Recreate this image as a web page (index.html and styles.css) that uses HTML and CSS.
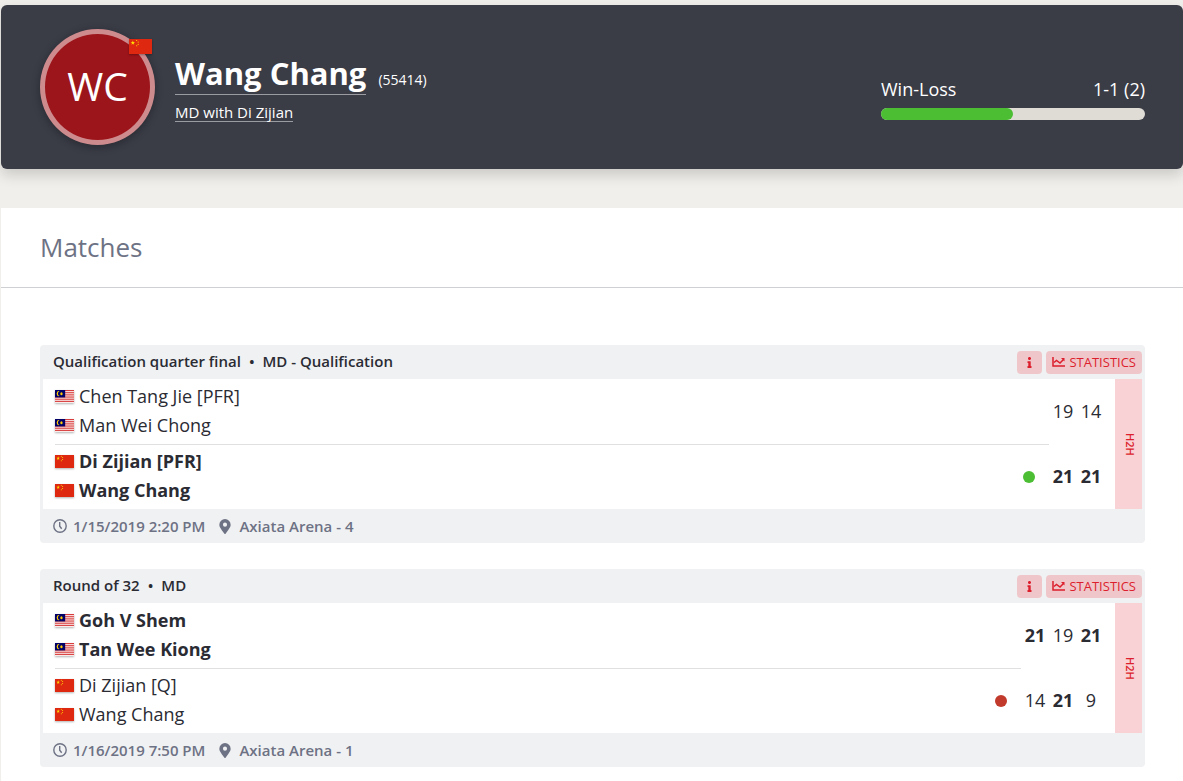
FILE: index.html
```html
<!DOCTYPE html>
<html lang="en">
<head>
    <meta charset="UTF-8">
    <meta name="viewport" content="width=device-width, initial-scale=1">
    <title>Wang Chang</title>
    <link rel="stylesheet" href="styles.css">
</head>
<body>

<svg class="sprite" aria-hidden="true">
    <symbol id="flag-chn" viewBox="0 0 30 20" preserveAspectRatio="none">
        <rect width="30" height="20" fill="#de2910"/>
        <path fill="#ffde00" d="M5 2l.7 2.1h2.2L6.1 5.4l.7 2.1L5 6.2 3.2 7.5l.7-2.1-1.8-1.3h2.2z"/>
        <g fill="#ffde00">
            <circle cx="10" cy="2" r=".8"/>
            <circle cx="12" cy="4" r=".8"/>
            <circle cx="12" cy="7" r=".8"/>
            <circle cx="10" cy="9" r=".8"/>
        </g>
    </symbol>
    <symbol id="flag-mas" viewBox="0 0 28 14" preserveAspectRatio="none">
        <rect width="28" height="14" fill="#fff"/>
        <path stroke="#cc0001" d="M0 .5h28M0 2.5h28M0 4.5h28M0 6.5h28M0 8.5h28M0 10.5h28M0 12.5h28"/>
        <rect width="15" height="8" fill="#010066"/>
        <path fill="#fc0" d="M6.6 1.7a2.7 2.7 0 1 0 0 4.6 2.3 2.3 0 1 1 0-4.6z"/>
        <circle cx="9.500" cy="4" r="1.700" fill="#fc0"/>
    </symbol>
    <symbol id="icon-info" viewBox="0 0 192 512">
        <path d="M20 424.200h20V279.800H20c-11 0-20-9-20-20V212c0-11 9-20 20-20h112c11 0 20 9 20 20v212.200h20c11 0 20 9 20 20V492c0 11-9 20-20 20H20c-11 0-20-9-20-20v-47.800c0-11 9-20 20-20zM96 0C56.200 0 24 32.200 24 72s32.200 72 72 72 72-32.200 72-72S135.800 0 96 0z"/>
    </symbol>
    <symbol id="icon-chart" viewBox="0 0 13 10">
        <path fill="none" stroke="currentColor" stroke-width="1.500" d="M1 0v9h12"/>
        <path fill="none" stroke="currentColor" stroke-width="1.500" d="M2 5.500l2.500-2L8 6l3.500-3.500"/>
        <path d="M9 1h3.500v3.500z"/>
    </symbol>
    <symbol id="icon-clock" viewBox="0 0 14 14">
        <circle cx="7" cy="7" r="6.200" fill="none" stroke="currentColor" stroke-width="1.400"/>
        <path fill="none" stroke="currentColor" stroke-width="1.400" d="M6.700 3v4.300l2 2.500"/>
    </symbol>
    <symbol id="icon-pin" viewBox="0 0 384 512">
        <path d="M172 502C27 291 0 270 0 192a192 192 0 0 1 384 0c0 78-27 99-172 310-10 13-30 13-40 0zm20-240a70 70 0 1 0 0-140 70 70 0 0 0 0 140z"/>
    </symbol>
</svg>

<header class="profile">
    <div class="avatar">
        WC
        <svg class="flag avatar-flag" role="img" aria-label="China"><use href="#flag-chn"/></svg>
    </div>
    <div class="profile-info">
        <div class="profile-title">
            <h1><a href="#">Wang Chang</a></h1>
            <span class="profile-id">(55414)</span>
        </div>
        <a class="profile-event" href="#">MD with Di Zijian</a>
    </div>
    <div class="record">
        <div class="record-label">
            <span id="win-loss">Win-Loss</span>
            <span>1-1 (2)</span>
        </div>
        <div class="bar" role="progressbar" aria-labelledby="win-loss" aria-valuenow="50">
            <div class="bar-fill" style="width: 50%"></div>
        </div>
    </div>
</header>

<main class="content">
    <h2 class="content-title">Matches</h2>

    <div class="matches">
        <article class="match">
            <div class="match-header">
                <span>Qualification quarter final</span>
                <span class="sep">•</span>
                <span>MD - Qualification</span>
                <div class="actions">
                    <button class="btn" type="button" aria-label="Info"><svg class="icon-info"><use href="#icon-info"/></svg></button>
                    <button class="btn" type="button"><svg class="icon-chart"><use href="#icon-chart"/></svg>STATISTICS</button>
                </div>
            </div>
            <div class="match-body">
                <div class="teams">
                    <div class="team">
                        <div class="players">
                            <a href="#"><svg class="flag"><use href="#flag-mas"/></svg>Chen Tang Jie [PFR]</a>
                            <a href="#"><svg class="flag"><use href="#flag-mas"/></svg>Man Wei Chong</a>
                        </div>
                        <div class="scores"><span>19</span><span>14</span></div>
                    </div>
                    <div class="team won">
                        <div class="players">
                            <a href="#"><svg class="flag"><use href="#flag-chn"/></svg>Di Zijian [PFR]</a>
                            <a href="#"><svg class="flag"><use href="#flag-chn"/></svg>Wang Chang</a>
                            <i class="dot dot-win"></i>
                        </div>
                        <div class="scores"><b>21</b><b>21</b></div>
                    </div>
                </div>
                <a class="h2h" href="#">H2H</a>
            </div>
            <div class="match-footer">
                <svg class="icon-clock"><use href="#icon-clock"/></svg>
                <span>1/15/2019 2:20 PM</span>
                <svg class="icon-pin"><use href="#icon-pin"/></svg>
                <span>Axiata Arena - 4</span>
            </div>
        </article>

        <article class="match">
            <div class="match-header">
                <span>Round of 32</span>
                <span class="sep">•</span>
                <span>MD</span>
                <div class="actions">
                    <button class="btn" type="button" aria-label="Info"><svg class="icon-info"><use href="#icon-info"/></svg></button>
                    <button class="btn" type="button"><svg class="icon-chart"><use href="#icon-chart"/></svg>STATISTICS</button>
                </div>
            </div>
            <div class="match-body">
                <div class="teams">
                    <div class="team won">
                        <div class="players">
                            <a href="#"><svg class="flag"><use href="#flag-mas"/></svg>Goh V Shem</a>
                            <a href="#"><svg class="flag"><use href="#flag-mas"/></svg>Tan Wee Kiong</a>
                        </div>
                        <div class="scores"><b>21</b><span>19</span><b>21</b></div>
                    </div>
                    <div class="team">
                        <div class="players">
                            <a href="#"><svg class="flag"><use href="#flag-chn"/></svg>Di Zijian [Q]</a>
                            <a href="#"><svg class="flag"><use href="#flag-chn"/></svg>Wang Chang</a>
                            <i class="dot dot-loss"></i>
                        </div>
                        <div class="scores"><span>14</span><b>21</b><span>9</span></div>
                    </div>
                </div>
                <a class="h2h" href="#">H2H</a>
            </div>
            <div class="match-footer">
                <svg class="icon-clock"><use href="#icon-clock"/></svg>
                <span>1/16/2019 7:50 PM</span>
                <svg class="icon-pin"><use href="#icon-pin"/></svg>
                <span>Axiata Arena - 1</span>
            </div>
        </article>
    </div>
</main>

</body>
</html>
```
FILE: styles.css
```css
* {
    box-sizing: border-box;
}

body {
    margin: 0;
    padding: 5px 0 0 1px;
    background: #f0efeb;
    color: #2a2b33;
    font-family: "Open Sans", sans-serif;
    font-size: 18px;
}

a {
    color: inherit;
    text-decoration: none;
}

svg {
    display: block;
    flex: none;
    fill: currentColor;
}

.sprite {
    position: absolute;
    width: 0;
    height: 0;
}

/* profile */
.profile {
    display: flex;
    align-items: center;
    padding: 24px 38px 24px 39px;
    border-radius: 6px;
    background: #3a3c46;
    color: #fff;
    box-shadow: 0 6px 14px rgba(0, 0, 0, 0.16);
}

.avatar {
    position: relative;
    display: flex;
    align-items: center;
    justify-content: center;
    width: 115px;
    height: 116px;
    padding-bottom: 3px;
    border: 5px solid #ce8b8e;
    border-radius: 50%;
    background: #9c151b;
    box-shadow: 0 2px 8px rgba(0, 0, 0, 0.3);
    font-size: 39px;
}

.flag {
    width: 19px;
    height: 13px;
    box-shadow: 0 1px 2px rgba(0, 0, 0, 0.3);
}

.avatar-flag {
    position: absolute;
    top: 5px;
    right: -2px;
    width: 23px;
    height: 15px;
}

.profile-info {
    flex: 1;
    padding-left: 20px;
}

.profile-title {
    display: flex;
    align-items: baseline;
    gap: 12px;
    margin-bottom: 4px;
}

h1 {
    margin: 0;
    border-bottom: 1px solid #9b9ca1;
    font-size: 31px;
    line-height: 42px;
}

.profile-id {
    font-size: 14px;
}

.profile-event {
    display: inline-block;
    border-bottom: 1px solid #9b9ca1;
    font-size: 15px;
    font-weight: 500;
    line-height: 18px;
}

.record {
    width: 264px;
    padding-top: 22px;
}

.record-label {
    display: flex;
    justify-content: space-between;
    margin-bottom: 7px;
    font-weight: 500;
    line-height: 24px;
}

.bar {
    height: 12px;
    border-radius: 6px;
    background: #dfdcd6;
}

.bar-fill {
    height: 100%;
    border-radius: 6px;
    background: #4bbe34;
}

/* matches */
.content {
    margin-top: 39px;
    background: #fff;
}

.content-title {
    margin: 0;
    padding: 19px 39px 20px;
    border-bottom: 1px solid #cfd0d3;
    color: #6d7284;
    font-size: 26px;
    font-weight: 400;
    line-height: 40px;
}

.matches {
    display: flex;
    flex-direction: column;
    gap: 26px;
    padding: 57px 38px 14px 39px;
}

.match {
    padding: 0 3px;
    border-radius: 4px;
    background: #f0f1f3;
}

.match-header,
.match-footer {
    display: flex;
    align-items: center;
    height: 34px;
    padding-left: 10px;
    font-size: 15px;
    font-weight: 600;
}

.match-header > span {
    padding-bottom: 2px;
}

.sep {
    margin: 0 8px;
}

.actions {
    display: flex;
    gap: 4px;
    margin-left: auto;
}

.btn {
    display: flex;
    align-items: center;
    gap: 4px;
    height: 23px;
    padding: 0 6px;
    border: 0;
    border-radius: 4px;
    background: #efc7ca;
    color: #dc1e2d;
    font-family: inherit;
    font-size: 13px;
}

.icon-info {
    width: 13px;
    height: 11px;
}

.icon-chart {
    width: 13px;
    height: 10px;
}

.match-body {
    display: flex;
    background: #fff;
}

.teams {
    flex: 1;
    padding: 0 10px 0 12px;
}

.team {
    display: flex;
}

.players {
    position: relative;
    flex: 1;
    padding: 3px 0 4px;
    line-height: 29px;
}

.team + .team .players {
    padding-top: 2px;
    border-top: 1px solid #dfe0e2;
}

.players a {
    display: flex;
    align-items: center;
    gap: 5px;
}

.won .players a {
    font-weight: 700;
}

.dot {
    position: absolute;
    top: 26px;
    right: 14px;
    width: 12px;
    height: 12px;
    border-radius: 50%;
}

.dot-win {
    background: #4bbe34;
}

.dot-loss {
    background: #c13a2b;
}

.scores {
    display: flex;
    align-items: center;
    padding-bottom: 1px;
    text-align: center;
}

.scores > * {
    width: 28px;
}

.h2h {
    display: flex;
    align-items: center;
    justify-content: center;
    width: 27px;
    padding-left: 3px;
    background: #f8d2d4;
    color: #dc1e2d;
    font-size: 11px;
    font-weight: 600;
    line-height: 16px;
    writing-mode: vertical-rl;
}

.match-footer {
    color: #6d7284;
}

.icon-clock {
    width: 14px;
    height: 14px;
    margin-right: 6px;
}

.icon-pin {
    width: 12px;
    height: 15px;
    margin: 0 8px 0 14px;
}
```
